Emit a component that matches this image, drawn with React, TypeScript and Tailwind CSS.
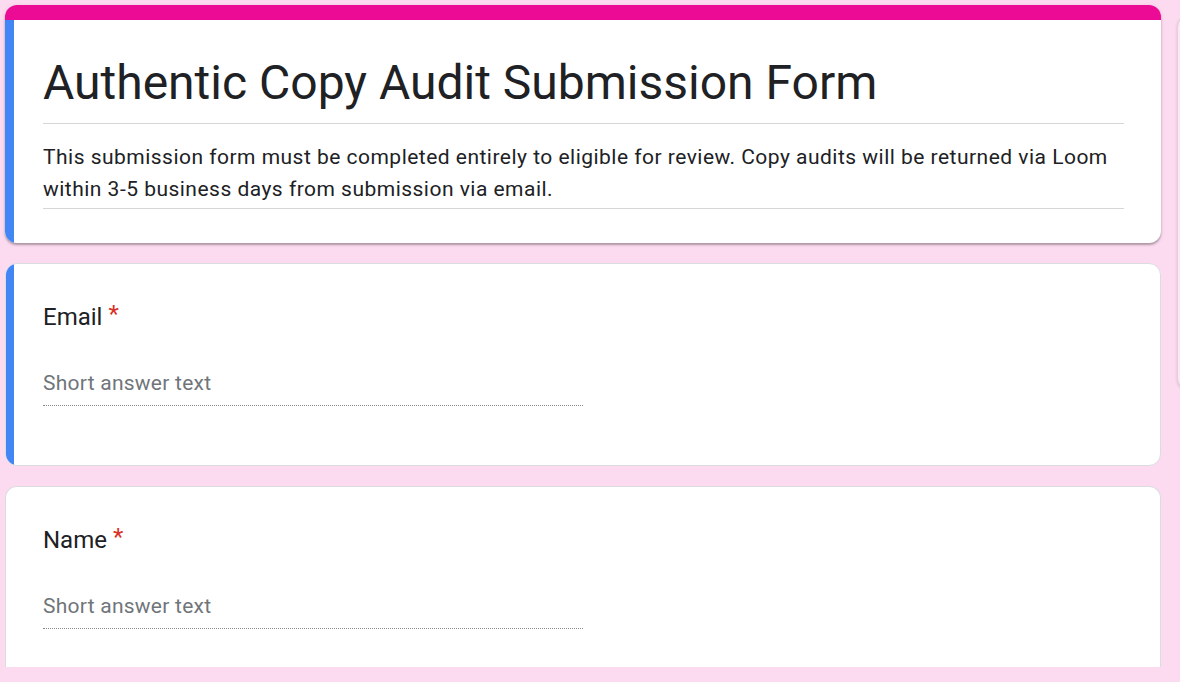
import React from "react";

type QuestionProps = {
  label: string;
  active?: boolean;
  cut?: boolean;
};

// One short-answer question card
const Question: React.FC<QuestionProps> = ({ label, active, cut }) => {
  return (
    <div
      className={`relative bg-white border border-[#dadce0] ${
        cut ? "h-[181px] rounded-t-[12px] border-b-0" : "h-[203px] rounded-[12px]"
      } overflow-hidden`}
    >
      {active && <div className="absolute left-[-1px] top-[-1px] bottom-[-1px] w-[9px] bg-[#4285f4]" />}
      <div className="pl-[37px] pr-[36px] pt-[35px]">
        <div className="text-[24px] leading-[36px] text-[#202124]">
          {label}
          <span className="text-[#d93025] ml-[6px] relative top-[-3px]">*</span>
        </div>
        <div className="mt-[32px] w-[540px] border-b border-dotted border-[#8a8a8a] pb-[6px]">
          <span className="text-[21px] leading-[32px] tracking-[0.25px] text-[#70757a]">Short answer text</span>
        </div>
      </div>
    </div>
  );
};

export default function App() {
  return (
    <div
      className="relative h-[682px] w-[1180px] overflow-hidden bg-[#fcdbf0]"
      style={{ fontFamily: "Roboto, 'Noto Sans', Arial, sans-serif" }}
    >
      {/* side toolbar, mostly off screen */}
      <div className="absolute left-[1177px] top-[15px] h-[375px] w-[60px] rounded-l-[12px] bg-[#fde6f5] border border-[#e5cfe0] shadow-[0_1px_3px_rgba(0,0,0,0.15)]" />

      <div className="flex w-[1156px] flex-col gap-5 pl-0 pt-[5px] ml-[5px]">
        {/* Header card */}
        <div className="rounded-[12px] bg-white shadow-[0_2px_2px_rgba(0,0,0,0.25),0_1px_4px_rgba(0,0,0,0.12)]">
          <div className="h-[15px] rounded-t-[12px] bg-[#ec0b94]" />
          <div className="relative h-[223px] rounded-b-[12px] overflow-hidden">
            <div className="absolute left-0 top-0 bottom-0 w-[9px] bg-[#4285f4]" />
            <div className="pl-[38px] pr-[37px] pt-[33px]">
              <div className="border-b border-[#d6d6d6] pb-[10px]">
                <h1 className="text-[48px] leading-[60px] text-[#202124]">
                  Authentic Copy Audit Submission Form
                </h1>
              </div>
              <div className="mt-[17px] border-b border-[#d6d6d6] pb-[3px]">
                <p className="text-[21px] leading-[32px] tracking-[0.48px] text-[#202124]">
                  This submission form must be completed entirely to eligible for review. Copy audits will be returned via Loom within 3-5 business days from submission via email.
                </p>
              </div>
            </div>
          </div>
        </div>

        <Question label="Email" active />
        <Question label="Name" cut />
      </div>
    </div>
  );
}
